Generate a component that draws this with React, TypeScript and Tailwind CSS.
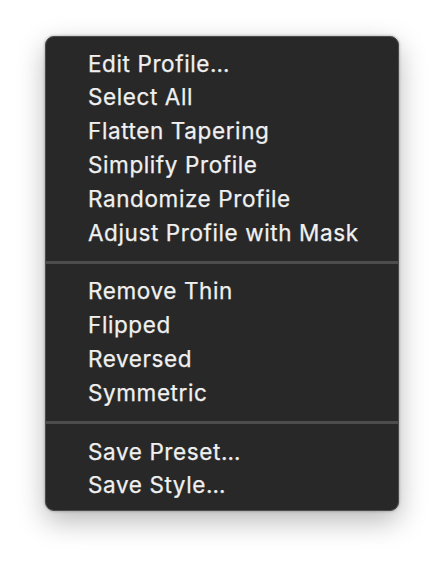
import * as React from "react";

const groups: string[][] = [
  ["Edit Profile…", "Select All", "Flatten Tapering", "Simplify Profile", "Randomize Profile", "Adjust Profile with Mask"],
  ["Remove Thin", "Flipped", "Reversed", "Symmetric"],
  ["Save Preset…", "Save Style…"],
];

function MenuItem({ label }: { label: string }): React.JSX.Element {
  return (
    <li className="flex h-[33.8px] items-center pl-[42px] text-[22.5px] leading-none tracking-[0.6px] text-[#f0f0f0] [-webkit-text-stroke:0.25px_#f0f0f0]">
      {label}
    </li>
  );
}

export default function App(): React.JSX.Element {
  return (
    <div className="flex h-[564px] w-[444px] bg-white pl-[45px] pt-[36px]" style={{ fontFamily: "Inter, 'Liberation Sans', sans-serif" }}>
      <div className="h-[475px] w-[354px] rounded-[9px] border border-[#4c4c4c] bg-[#282828] pt-[10px] shadow-[0_10px_28px_rgba(0,0,0,0.28),0_0_3px_rgba(0,0,0,0.35)]">
        {groups.map((items, i) => (
          <React.Fragment key={i}>
            {i > 0 && (
              <div className="flex h-[25px] items-center">
                <div className="h-[3px] w-full bg-[#4d4d4d]" />
              </div>
            )}
            <ul>
              {items.map((label) => (
                <MenuItem key={label} label={label} />
              ))}
            </ul>
          </React.Fragment>
        ))}
      </div>
    </div>
  );
}
